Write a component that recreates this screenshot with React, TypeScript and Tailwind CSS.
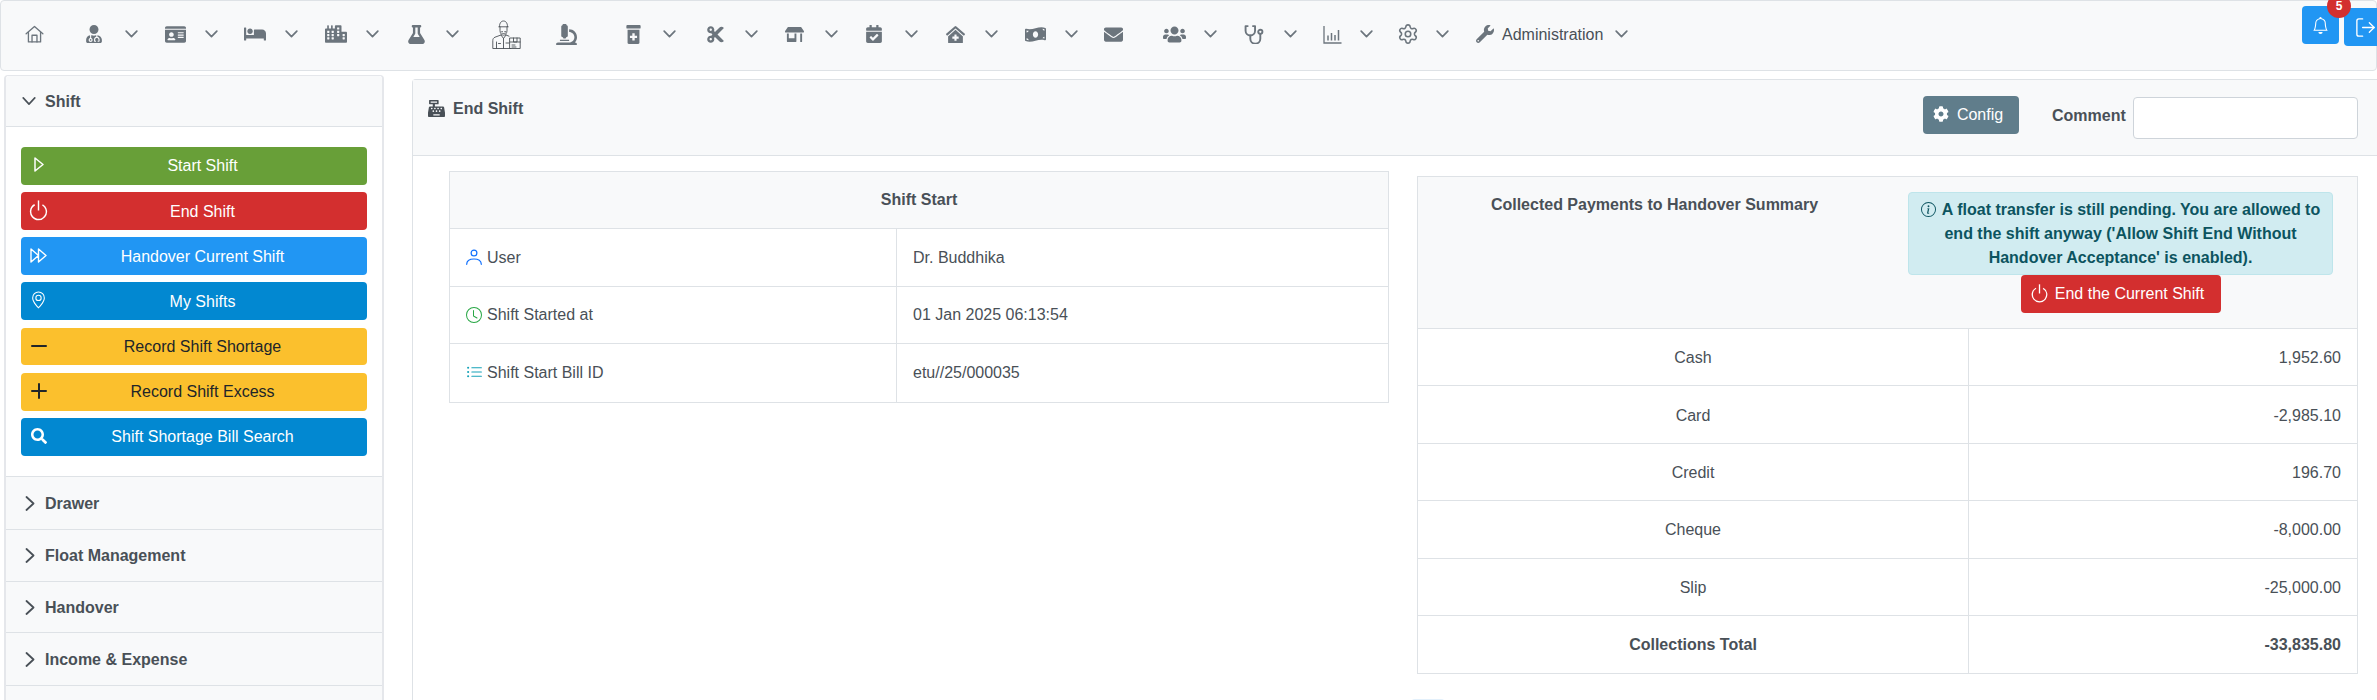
import React from "react";
import { FaUserMd, FaIdCard, FaBed, FaCity, FaFlask, FaMicroscope, FaPrescriptionBottleAlt, FaCut, FaStoreAlt, FaCalendarCheck, FaClinicMedical, FaMoneyBillWave, FaEnvelope, FaUsers, FaWrench, FaCog, FaCashRegister, FaSearch } from "react-icons/fa";
import { BsPower, BsGeoAlt, BsDash, BsPlus, BsBell, BsClock, BsListUl, BsInfoCircle } from "react-icons/bs";
import { Settings, LogOut } from "lucide-react";

const Chev = ({ className = "" }: { className?: string }) => (
  <svg viewBox="0 0 14 9" className={"w-[13px] h-[8px] -mr-[1px] shrink-0 " + className} fill="none" stroke="#6c757d" strokeWidth="1.9" strokeLinecap="round" strokeLinejoin="round">
    <polyline points="1,1.2 7,7.4 13,1.2" />
  </svg>
);

const SideChevRight = () => (
  <svg viewBox="0 0 10 15" className="w-[10px] h-[15px] shrink-0" fill="none" stroke="#495057" strokeWidth="1.8" strokeLinecap="round" strokeLinejoin="round">
    <polyline points="1.500,1 8.500,7.500 1.500,14" />
  </svg>
);

const SideChevDown = () => (
  <svg viewBox="0 0 15 9" className="w-[14px] h-[8px] shrink-0" fill="none" stroke="#495057" strokeWidth="1.8" strokeLinecap="round" strokeLinejoin="round">
    <polyline points="1,1 7.500,8 14,1" />
  </svg>
);

const HomeIcon = () => (
  <svg viewBox="0 0 20 20" className="w-[19px] h-[19px]" fill="none" stroke="#6c757d" strokeWidth="1.4" strokeLinejoin="round" strokeLinecap="round">
    <path d="M1.2 9.2 10 1.6l8.800 7.600" />
    <path d="M3.600 7.600V17.800h12.800V7.600" />
    <path d="M7.400 17.800v-7h5.200v7" />
  </svg>
);

const ChartIcon = () => (
  <svg viewBox="0 0 19 19" className="w-[19px] h-[19px]" fill="none" stroke="#6c757d" strokeWidth="1.300">
    <path d="M1 1v17h17.500" />
    <path d="M5 15.500v-5M8.500 15.500V8M12 15.500v-5.500M15.500 15.500V5" strokeWidth="1.500" />
  </svg>
);

const StethIcon = () => (
  <svg viewBox="0 0 19 18" className="w-[20px] h-[19px]" fill="none" stroke="#6c757d" strokeWidth="1.800" strokeLinecap="round" strokeLinejoin="round">
    <path d="M3.500 1H1.500V5.500a4.500 4.500 0 0 0 9 0V1H8.500" />
    <path d="M6 10v3a4.500 4.500 0 0 0 9.500 0V8.500" />
    <circle cx="15.500" cy="6.500" r="2" />
  </svg>
);

const Courier = () => (
  <svg viewBox="0 0 29 29" className="w-[29px] h-[29px]" fill="none" stroke="#4b5056" strokeWidth="0.9" strokeLinejoin="round" strokeLinecap="round">
    <path d="M7.500 6.500C7.500 2.500 9.500 1 11.500 1s4 1.500 4 5.500" />
    <path d="M6.800 6.800h9.400" />
    <path d="M8 7v3.500c0 2.800 1.800 4.700 3.500 4.700s3.500-1.900 3.500-4.700V7" />
    <path d="M9.800 11.500h.6M12.800 11.500h.6M10 13c1 .8 2.200.8 3.200 0" />
    <path d="M9 15l-6 2.200C1.500 17.800.800 19 .800 20.500V28.500h18" />
    <path d="M14 15l3 1.200M9 15l2.500 3.500L14 15" />
    <path d="M11.500 18.500v10M4.500 22v6.500M14 23h3M6.500 23.500h2" />
    <rect x="18" y="18" width="10.200" height="10.500" />
    <path d="M18 22h10.200M21.500 18v4h3.500v-4M20 25h3M20 27h4" />
  </svg>
);

const PlayIcon = () => (
  <svg viewBox="0 0 10 15" className="w-[10px] h-[15px]" fill="none" stroke="white" strokeWidth="1.5" strokeLinejoin="round"><path d="M1 1l8 6.500L1 14z" /></svg>
);
const DoubleIcon = () => (
  <svg viewBox="0 0 17 15" className="w-[17px] h-[15px]" fill="none" stroke="white" strokeWidth="1.4" strokeLinejoin="round"><path d="M1 1l7.500 6.500L1 14zM8.500 1l7.500 6.500-7.500 6.500z" /></svg>
);
const UserIcon = () => (
  <svg viewBox="0 0 16 16" className="w-[16px] h-[16px] -mt-[1px] shrink-0" fill="none" stroke="#0d6efd" strokeWidth="1.200" strokeLinecap="round">
    <circle cx="8" cy="4" r="2.900" />
    <path d="M.700 15.300c0-3.500 3-5.300 7.300-5.300s7.300 1.800 7.300 5.300" />
  </svg>
);

const items = [
  { icon: <HomeIcon />, cls: "ml-0" },
  { icon: <FaUserMd size={18} color="#6c757d" />, cls: "ml-[36px]", chev: "ml-[19px]" },
  { icon: <FaIdCard size={21} color="#6c757d" />, cls: "ml-[26px]", chev: "ml-[18px]" },
  { icon: <FaBed size={22} color="#6c757d" />, cls: "ml-[26px]", chev: "ml-[18px]" },
  { icon: <FaCity size={22} color="#6c757d" />, cls: "ml-[27px]", chev: "ml-[18px]" },
  { icon: <FaFlask size={19} color="#6c757d" />, cls: "ml-[26px]", chev: "ml-[18px]" },
  { icon: <Courier />, cls: "ml-[34px] w-[29px]" },
  { icon: <FaMicroscope size={21} color="#6c757d" />, cls: "ml-[33px]" },
  { icon: <FaPrescriptionBottleAlt size={19} color="#6c757d" />, cls: "ml-[43px]", chev: "ml-[18px]" },
  { icon: <FaCut size={19} color="#6c757d" />, cls: "ml-[28px]", chev: "ml-[18px]" },
  { icon: <FaStoreAlt size={19} color="#6c757d" />, cls: "ml-[25px]", chev: "ml-[19px]" },
  { icon: <FaCalendarCheck size={18} color="#6c757d" />, cls: "ml-[25px]", chev: "ml-[19px]" },
  { icon: <FaClinicMedical size={19} color="#6c757d" />, cls: "ml-[26px]", chev: "ml-[18px]" },
  { icon: <FaMoneyBillWave size={21} color="#6c757d" />, cls: "ml-[26px]", chev: "ml-[18px]" },
  { icon: <FaEnvelope size={19} color="#6c757d" />, cls: "ml-[24px]" },
  { icon: <FaUsers size={23} color="#6c757d" />, cls: "ml-[37px]", chev: "ml-[18px]" },
  { icon: <StethIcon />, cls: "ml-[26px]", chev: "ml-[18px]" },
  { icon: <ChartIcon />, cls: "ml-[24px]", chev: "ml-[16px]" },
  { icon: <Settings size={22} color="#6c757d" strokeWidth={1.7} />, cls: "ml-[24px]", chev: "ml-[16px]" },
];

const btns = [
  { label: "Start Shift", cls: "bg-[#689f38] text-white", icon: <PlayIcon /> },
  { label: "End Shift", cls: "bg-[#d32f2f] text-white", icon: <BsPower size={23} className="shrink-0" /> },
  { label: "Handover Current Shift", cls: "bg-[#2196f3] text-white", icon: <DoubleIcon /> },
  { label: "My Shifts", cls: "bg-[#0288d1] text-white", icon: <BsGeoAlt size={18} /> },
  { label: "Record Shift Shortage", cls: "bg-[#fbc02d] text-[#212529]", icon: <BsDash size={32} className="shrink-0" /> },
  { label: "Record Shift Excess", cls: "bg-[#fbc02d] text-[#212529]", icon: <BsPlus size={32} className="shrink-0" /> },
  { label: "Shift Shortage Bill Search", cls: "bg-[#0288d1] text-white", icon: <FaSearch size={16} /> },
];

const sections = [
  { label: "Drawer", h: "h-[53px]" },
  { label: "Float Management", h: "h-[52px]" },
  { label: "Handover", h: "h-[51px]" },
  { label: "Income & Expense", h: "h-[53px]" },
  { label: "", h: "h-[40px]" },
];

const rows = [
  ["Cash", "1,952.60"],
  ["Card", "-2,985.10"],
  ["Credit", "196.70"],
  ["Cheque", "-8,000.00"],
  ["Slip", "-25,000.00"],
];

export default function App() {
  return (
    <div className="h-[700px] w-[2377px] overflow-hidden bg-white text-[16px] text-[#495057] font-['Liberation_Sans',Arial,sans-serif]">
      {/* top nav */}
      <nav className="relative h-[71px] border border-[#dee2e6] rounded-[4px] bg-[#f8f9fa] flex items-center pl-[21px] pb-[3px]">
        {items.map((it, i) => (
          <div key={i} className={"flex items-center shrink-0 " + it.cls}>
            <span className={"flex items-center justify-center h-[30px] " + (it.cls.includes("w-[29px]") ? "w-[29px]" : "w-[24px]")}>{it.icon}</span>
            {it.chev && <Chev className={it.chev} />}
          </div>
        ))}
        <div className="flex items-center shrink-0 ml-[25px]">
          <span className="flex items-center justify-center w-[24px] h-[30px]"><FaWrench size={18} color="#6c757d" /></span>
          <span className="ml-[5px] w-[101px] text-[#495057] whitespace-nowrap pt-[1px]">Administration</span>
          <Chev className="ml-[12px]" />
        </div>
        <div className="ml-auto flex items-start self-start">
          <div className="relative mt-[5px] w-[37px] h-[38px] rounded-[4px] bg-[#2196f3] flex items-center justify-center text-white">
            <BsBell size={17} />
            <span className="absolute -top-[12px] -right-[12px] w-[24px] h-[24px] rounded-full bg-[#d32f2f] text-white text-[12px] font-bold flex items-center justify-center">5</span>
          </div>
          <div className="mt-[7px] ml-[5px] -mr-[10px] w-[42px] h-[38px] rounded-[4px] bg-[#2196f3] flex items-center justify-center text-white">
            <LogOut size={23} strokeWidth={1.400} />
          </div>
        </div>
      </nav>

      <div className="flex items-start">
        {/* sidebar */}
        <aside className="mt-[4px] ml-[4px] w-[380px] shrink-0 border-x-2 border-t border-[#e5e7eb] rounded-t-[4px]">
          <div className="h-[51px] bg-[#f8f9fa] border-b border-[#dee2e6] rounded-t-[4px] flex items-center pl-[16px] font-bold">
            <SideChevDown />
            <span className="ml-[9px] pt-[1px]">Shift</span>
          </div>
          <div className="h-[349px] pt-[20px] pl-[15px] pr-[15px] flex flex-col gap-[7.420px] bg-white">
            {btns.map((b) => (
              <button key={b.label} className={"h-[37.750px] shrink-0 rounded-[4px] flex items-center pl-[9px] pr-[9px] " + b.cls}>
                <span className="w-[17px] h-[20px] flex items-center justify-center -mt-[2px]">{b.icon}</span>
                <span className="flex-1 text-center pt-[1px]">{b.label}</span>
              </button>
            ))}
          </div>
          {sections.map((s, i) => (
            <div key={i} className={s.h + " bg-[#f8f9fa] border-t border-[#dee2e6] flex items-center pl-[19px] font-bold"}>
              {s.label && <SideChevRight />}
              <span className="ml-[10px] pt-[1px]">{s.label}</span>
            </div>
          ))}
        </aside>

        {/* main card */}
        <main className="mt-[8px] ml-[28px] w-[1980px] shrink-0 border-l border-t border-[#dee2e6] rounded-tl-[4px]">
          <header className="h-[76px] bg-[#f8f9fa] border-b border-[#dee2e6] flex items-start pl-[15px] pr-[34px]">
            <div className="flex items-center mt-[17px] font-bold flex-1">
              <FaCashRegister size={17} className="-mt-[2px]" />
              <span className="ml-[8px]">End Shift</span>
            </div>
            <button className="mt-[16px] h-[38px] w-[96px] rounded-[4px] bg-[#607d8b] text-white flex items-center justify-center gap-[8px] shrink-0 pr-[6px]">
              <FaCog size={16} className="-mt-[2px]" />
              <span className="-mt-[1px]">Config</span>
            </button>
            <label className="ml-[33px] mt-[24px] font-bold w-[73px] whitespace-nowrap">Comment</label>
            <input className="ml-[8px] mt-[17px] w-[225px] h-[42px] bg-white border border-[#ced4da] rounded-[4px] shrink-0" />
          </header>
          <div className="flex items-start">
            {/* shift start */}
            <div className="ml-[36px] mt-[15px] w-[940px] shrink-0 border border-[#dee2e6]">
              <div className="h-[57px] bg-[#f8f9fa] flex items-center justify-center font-bold border-b border-[#dee2e6]">Shift Start</div>
              <div className="h-[58px] flex border-b border-[#dee2e6]">
                <div className="w-[447px] border-r border-[#dee2e6] flex items-center pl-[16px]">
                  <UserIcon /><span className="ml-[5px]">User</span>
                </div>
                <div className="flex-1 flex items-center pl-[16px]">Dr. Buddhika</div>
              </div>
              <div className="h-[57px] flex border-b border-[#dee2e6]">
                <div className="w-[447px] border-r border-[#dee2e6] flex items-center pl-[16px]">
                  <BsClock size={16} color="#28a745" className="-mt-[1px]" /><span className="ml-[5px]">Shift Started at</span>
                </div>
                <div className="flex-1 flex items-center pl-[16px]">01 Jan 2025 06:13:54</div>
              </div>
              <div className="h-[58px] flex">
                <div className="w-[447px] border-r border-[#dee2e6] flex items-center pl-[16px]">
                  <BsListUl size={17} color="#17a2b8" className="-mt-[1px]" /><span className="ml-[4px]">Shift Start Bill ID</span>
                </div>
                <div className="flex-1 flex items-center pl-[16px]">etu//25/000035</div>
              </div>
            </div>

            {/* summary */}
            <div className="ml-[28px] mt-[20px] w-[941px] shrink-0">
              <div className="border border-[#dee2e6]">
                <div className="h-[152px] bg-[#f8f9fa] border-b border-[#dee2e6] flex items-start">
                  <div className="w-[473px] text-center font-bold mt-[16px] shrink-0">Collected Payments to Handover Summary</div>
                  <div className="ml-[17px] mt-[15px] w-[425px] shrink-0 flex flex-col items-center">
                    <div className="w-full h-[83px] bg-[#d1ecf1] border border-[#bee5eb] rounded-[4px] text-[#0c5460] font-bold text-center leading-[24px] py-[5px]">
                      <BsInfoCircle size={15} className="inline-block mr-[6px] -mt-[2px]" />
                      A float transfer is still pending. You are allowed to<br />end the shift anyway ('Allow Shift End Without<br />Handover Acceptance' is enabled).
                    </div>
                    <button className="w-[200px] h-[38px] rounded-[4px] bg-[#d32f2f] text-white flex items-center justify-center gap-[5px] pr-[8px]">
                      <BsPower size={21} className="-mt-[1px]" />
                      End the Current Shift
                    </button>
                  </div>
                </div>
                {rows.map(([l, v]) => (
                  <div key={l} className="h-[57.400px] flex border-b border-[#dee2e6]">
                    <div className="w-[551px] border-r border-[#dee2e6] flex items-center justify-center pt-[2px]">{l}</div>
                    <div className="flex-1 flex items-center justify-end pr-[16px] pt-[2px]">{v}</div>
                  </div>
                ))}
                <div className="h-[57px] flex font-bold">
                  <div className="w-[551px] border-r border-[#dee2e6] flex items-center justify-center pt-[1px]">Collections Total</div>
                  <div className="flex-1 flex items-center justify-end pr-[16px] pt-[1px]">-33,835.80</div>
                </div>
              </div>
              <div className="mt-[25px] -ml-[6px] w-[34px] h-[20px] rounded-t-[4px] bg-[#e3f0fb]" />
            </div>
          </div>
        </main>
      </div>
    </div>
  );
}
